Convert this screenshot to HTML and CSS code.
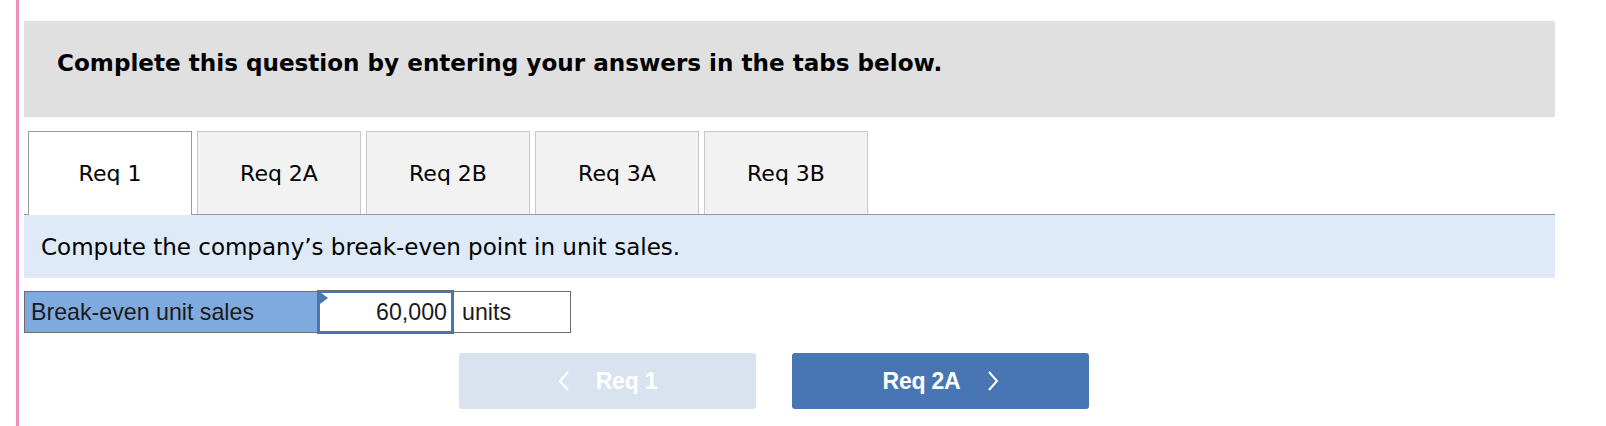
FILE: index.html
```html
<!DOCTYPE html>
<html lang="en">
<head>
<meta charset="utf-8">
<title>Req 1</title>
<link rel="stylesheet" href="styles.css">
</head>
<body>
<div class="page">
  <div class="rail"></div>
  <main class="content">
    <div class="instructions">
      <p>Complete this question by entering your answers in the tabs below.</p>
    </div>
    <div class="tabs">
      <div class="tab active">Req 1</div>
      <div class="tab">Req 2A</div>
      <div class="tab">Req 2B</div>
      <div class="tab">Req 3A</div>
      <div class="tab">Req 3B</div>
    </div>
    <div class="panel">
      <p>Compute the company’s break-even point in unit sales.</p>
    </div>
    <div class="answer-row">
      <div class="label-cell">Break-even unit sales</div>
      <div class="input-cell"><span class="marker"></span>60,000</div>
      <div class="unit-cell">units</div>
    </div>
    <div class="nav">
      <div class="btn prev">
        <svg class="chev" width="12" height="20" viewBox="0 0 12 20"><path d="M10 1 L2 10 L10 19" fill="none" stroke="#ffffff" stroke-width="2"/></svg>
        <span>Req 1</span>
      </div>
      <div class="btn next">
        <span>Req 2A</span>
        <svg class="chev" width="12" height="20" viewBox="0 0 12 20"><path d="M2 1 L10 10 L2 19" fill="none" stroke="#ffffff" stroke-width="2"/></svg>
      </div>
    </div>
  </main>
</div>
</body>
</html>
```

FILE: styles.css
```css
html, body {
  margin: 0;
  padding: 0;
  background: #ffffff;
}

.page {
  display: flex;
  min-height: 426px;
  padding-left: 16px;
}

.rail {
  width: 3px;
  background: #ee8fc0;
  flex: none;
}

.content {
  margin-left: 5px;
  width: 1531px;
  padding-top: 21px;
}

.instructions {
  background: #e0e0e0;
  height: 96px;
  box-sizing: border-box;
  padding: 27px 0 0 33px;
}

.instructions p {
  margin: 0;
  font-family: "DejaVu Sans", Verdana, sans-serif;
  font-weight: bold;
  font-size: 23.1px;
  line-height: 30px;
  color: #000;
}

.tabs {
  display: flex;
  gap: 5px;
  margin-top: 14px;
  padding-left: 4px;
  border-bottom: 1px solid #999999;
}

.tab {
  width: 162px;
  height: 82px;
  box-sizing: content-box;
  border: 1px solid #c8c8c8;
  border-bottom: none;
  background: #f2f2f2;
  display: flex;
  align-items: center;
  justify-content: center;
  font-family: "DejaVu Sans", Verdana, sans-serif;
  font-size: 22px;
  color: #000;
}

.tab.active {
  background: #ffffff;
  border-color: #999999;
  margin-bottom: -1px;
  height: 83px;
}

.panel {
  background: #deeaf7;
  height: 63px;
  display: flex;
  align-items: center;
  padding-left: 17px;
}

.panel p {
  margin: 0;
  font-family: "DejaVu Sans", Verdana, sans-serif;
  font-size: 23px;
  color: #000;
}

.answer-row {
  display: flex;
  margin-top: 13px;
  height: 42px;
  font-family: "Liberation Sans", Arial, sans-serif;
  font-size: 23.2px;
  color: #1a1a1a;
}

.label-cell {
  width: 287px;
  background: #7faade;
  border: 1px solid #6c6c6c;
  border-right: none;
  display: flex;
  align-items: center;
  padding-left: 6px;
}

.input-cell {
  position: relative;
  width: 127px;
  border: 2px solid #4d75b1;
  outline: 1px solid #6c6c6c;
  display: flex;
  align-items: center;
  justify-content: flex-end;
  padding-right: 4px;
  background: #fff;
}

.marker {
  position: absolute;
  left: 0;
  top: -1px;
  width: 0;
  height: 0;
  border-top: 6px solid transparent;
  border-bottom: 6px solid transparent;
  border-left: 8px solid #4d75b1;
}

.unit-cell {
  width: 108px;
  border: 1px solid #6c6c6c;
  border-left: none;
  display: flex;
  align-items: center;
  padding-left: 9px;
  background: #fff;
}

.nav {
  display: flex;
  gap: 36px;
  margin-top: 20px;
  padding-left: 435px;
}

.btn {
  width: 297px;
  height: 56px;
  border-radius: 3px;
  display: flex;
  align-items: center;
  justify-content: center;
  gap: 26px;
  font-family: "Liberation Sans", Arial, sans-serif;
  font-weight: bold;
  font-size: 23px;
  letter-spacing: -0.2px;
  color: #ffffff;
}

.btn .chev {
  flex: none;
}

.prev {
  background: #d9e3ef;
}

.next {
  background: #4876b4;
}
```
